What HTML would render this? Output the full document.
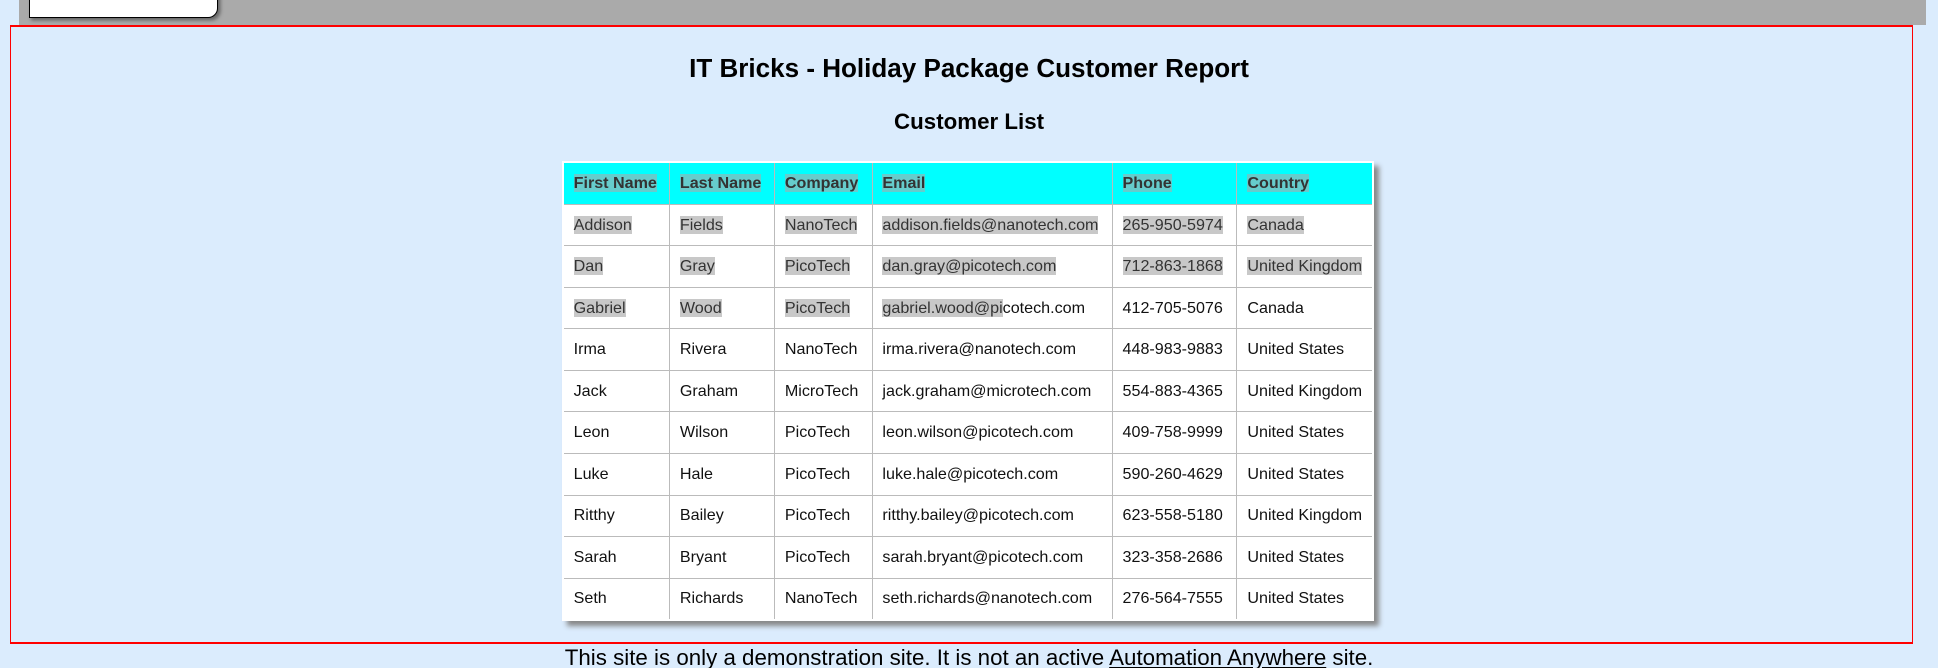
<!DOCTYPE html>
<html><head><meta charset="utf-8"><style>
html,body{margin:0;padding:0;background:#dbecfd;width:1938px;height:668px;overflow:hidden;font-family:"Liberation Sans",Arial,sans-serif;}
#w{zoom:1.24;position:relative;width:1563px;height:539px;}
.bar{position:absolute;left:15px;top:0;width:1538px;height:20px;background:#aaaaaa;}
.logo{position:absolute;left:23px;top:-10px;width:151px;height:23px;background:#fff;border:1px solid #000;border-radius:0 0 8px 0;box-shadow:2px 2px 3px #666;overflow:hidden;}
.logo span{position:absolute;left:14px;top:-13px;font-size:24px;font-weight:bold;color:#f6b8a0;}
.main{position:absolute;left:8px;top:20px;width:1533px;height:496px;border:1px solid #ff0000;border-width:2px 1px 2px 1px;background:#dbecfd;}
h1{position:absolute;left:0;width:1563px;top:43px;margin:0;text-align:center;font-size:21px;font-weight:bold;}
h2{position:absolute;left:0;width:1563px;top:88px;margin:0;text-align:center;font-size:18px;font-weight:bold;}
table{position:absolute;left:453px;top:130px;width:655px;border-collapse:separate;border-spacing:0;background:#fff;border:2px solid #fff;box-shadow:4px 4px 4px #888;font-size:13px;}
td,th{height:32.7px;padding:0 8px;border-right:1px solid #bbb;border-bottom:1px solid #bbb;text-align:left;white-space:nowrap;color:#111;}
td:last-child,th:last-child{border-right:none}
tr:last-child td{border-bottom:none}
th{background:#00ffff;font-weight:bold;color:#333}
th span{background:#6cc}
.s{background:#c8c8c8;color:#333}
.foot{position:absolute;left:0;width:1563px;top:520px;text-align:center;font-size:18px;}
.foot u{text-decoration:underline}
</style></head><body><div id="w">
<div class="bar"></div>
<div class="logo"><span>IT Bricks</span></div>
<div class="main"></div>
<h1>IT Bricks - Holiday Package Customer Report</h1>
<h2>Customer List</h2>
<table>
<tr><th style="width:69px"><span>First Name</span></th><th style="width:68px"><span>Last Name</span></th><th style="width:62px"><span>Company</span></th><th style="width:177px"><span>Email</span></th><th style="width:84px"><span>Phone</span></th><th><span>Country</span></th></tr>
<tr><td><span class="s">Addison</span></td><td><span class="s">Fields</span></td><td><span class="s">NanoTech</span></td><td><span class="s">addison.fields@nanotech.com</span></td><td><span class="s">265-950-5974</span></td><td><span class="s">Canada</span></td></tr>
<tr><td><span class="s">Dan</span></td><td><span class="s">Gray</span></td><td><span class="s">PicoTech</span></td><td><span class="s">dan.gray@picotech.com</span></td><td><span class="s">712-863-1868</span></td><td><span class="s">United Kingdom</span></td></tr>
<tr><td><span class="s">Gabriel</span></td><td><span class="s">Wood</span></td><td><span class="s">PicoTech</span></td><td><span class="s">gabriel.wood@pi</span>cotech.com</td><td>412-705-5076</td><td>Canada</td></tr>
<tr><td>Irma</td><td>Rivera</td><td>NanoTech</td><td>irma.rivera@nanotech.com</td><td>448-983-9883</td><td>United States</td></tr>
<tr><td>Jack</td><td>Graham</td><td>MicroTech</td><td>jack.graham@microtech.com</td><td>554-883-4365</td><td>United Kingdom</td></tr>
<tr><td>Leon</td><td>Wilson</td><td>PicoTech</td><td>leon.wilson@picotech.com</td><td>409-758-9999</td><td>United States</td></tr>
<tr><td>Luke</td><td>Hale</td><td>PicoTech</td><td>luke.hale@picotech.com</td><td>590-260-4629</td><td>United States</td></tr>
<tr><td>Ritthy</td><td>Bailey</td><td>PicoTech</td><td>ritthy.bailey@picotech.com</td><td>623-558-5180</td><td>United Kingdom</td></tr>
<tr><td>Sarah</td><td>Bryant</td><td>PicoTech</td><td>sarah.bryant@picotech.com</td><td>323-358-2686</td><td>United States</td></tr>
<tr><td>Seth</td><td>Richards</td><td>NanoTech</td><td>seth.richards@nanotech.com</td><td>276-564-7555</td><td>United States</td></tr>
</table>
<div class="foot">This site is only a demonstration site. It is not an active <u>Automation Anywhere</u> site.</div>
</div></body></html>
